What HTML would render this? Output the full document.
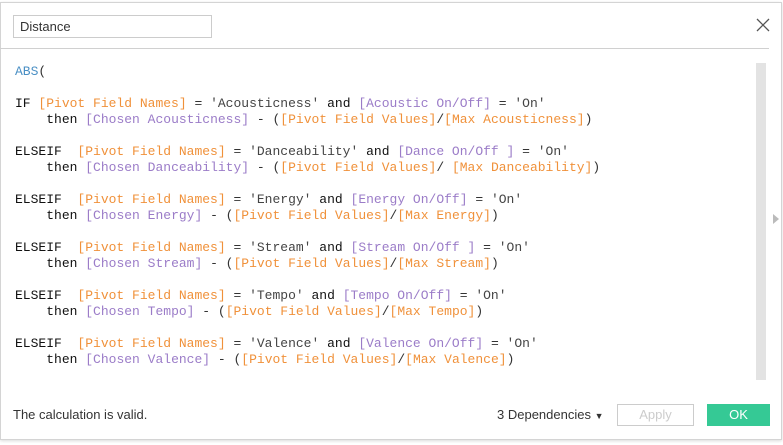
<!DOCTYPE html>
<html><head><style>
body{margin:0;width:783px;height:445px;background:#fff;position:relative;overflow:hidden;font-family:"Liberation Sans",sans-serif}
.dlg{position:absolute;left:0;top:2px;width:780px;height:436px;border:1px solid #d4d4d4;background:#fff;box-shadow:0 1px 3px rgba(0,0,0,.15)}
.name{position:absolute;left:13px;top:15px;border:1px solid #ccc;font-size:13px;color:#333;line-height:21px;padding-left:6px;box-sizing:border-box;width:199px;height:23px}
.hr{position:absolute;left:0;top:48px;width:769px;height:1px;background:#d0d0d0}
.x{position:absolute;left:756px;top:18px}
pre{position:absolute;left:15px;top:64px;margin:0;font:13px/16px "Liberation Mono",monospace;color:#333}
.k{color:#111}.f{color:#f0913a}.p{color:#9b7cc8}.fn{color:#4a8fc4}.s{color:#444}
.sb{position:absolute;left:756px;top:63px;width:10px;height:317px;background:#e3e3e3}
.arr{position:absolute;left:773px;top:214px;width:0;height:0;border-left:6px solid #bbb;border-top:5px solid transparent;border-bottom:5px solid transparent}
.valid{position:absolute;left:13px;top:407px;font-size:13px;color:#333}
.dep{position:absolute;left:497px;top:407px;font-size:13px;color:#333}
.apply{position:absolute;left:617px;top:404px;width:77px;height:22px;border:1px solid #ccc;box-sizing:border-box;font-size:13px;color:#ccc;text-align:center;line-height:20px}
.ok{position:absolute;left:707px;top:404px;width:63px;height:22px;background:#35c995;color:#fff;font-size:13px;text-align:center;line-height:22px}
</style></head><body>
<div class="dlg"></div>
<div class="name">Distance</div>
<svg class="x" width="14" height="14" viewBox="0 0 14 14"><path d="M1 1L13 13M13 1L1 13" stroke="#555" stroke-width="1.3"/></svg>
<div class="hr"></div>
<pre><span class="fn">ABS</span>(

<span class="k">IF</span> <span class="f">[Pivot Field Names]</span> = <span class="s">'Acousticness'</span> <span class="k">and</span> <span class="p">[Acoustic On/Off]</span> = <span class="s">'On'</span>
    <span class="k">then</span> <span class="p">[Chosen Acousticness]</span> - (<span class="f">[Pivot Field Values]</span>/<span class="f">[Max Acousticness]</span>)

<span class="k">ELSEIF</span>  <span class="f">[Pivot Field Names]</span> = <span class="s">'Danceability'</span> <span class="k">and</span> <span class="p">[Dance On/Off ]</span> = <span class="s">'On'</span>
    <span class="k">then</span> <span class="p">[Chosen Danceability]</span> - (<span class="f">[Pivot Field Values]</span>/ <span class="f">[Max Danceability]</span>)

<span class="k">ELSEIF</span>  <span class="f">[Pivot Field Names]</span> = <span class="s">'Energy'</span> <span class="k">and</span> <span class="p">[Energy On/Off]</span> = <span class="s">'On'</span>
    <span class="k">then</span> <span class="p">[Chosen Energy]</span> - (<span class="f">[Pivot Field Values]</span>/<span class="f">[Max Energy]</span>)

<span class="k">ELSEIF</span>  <span class="f">[Pivot Field Names]</span> = <span class="s">'Stream'</span> <span class="k">and</span> <span class="p">[Stream On/Off ]</span> = <span class="s">'On'</span>
    <span class="k">then</span> <span class="p">[Chosen Stream]</span> - (<span class="f">[Pivot Field Values]</span>/<span class="f">[Max Stream]</span>)

<span class="k">ELSEIF</span>  <span class="f">[Pivot Field Names]</span> = <span class="s">'Tempo'</span> <span class="k">and</span> <span class="p">[Tempo On/Off]</span> = <span class="s">'On'</span>
    <span class="k">then</span> <span class="p">[Chosen Tempo]</span> - (<span class="f">[Pivot Field Values]</span>/<span class="f">[Max Tempo]</span>)

<span class="k">ELSEIF</span>  <span class="f">[Pivot Field Names]</span> = <span class="s">'Valence'</span> <span class="k">and</span> <span class="p">[Valence On/Off]</span> = <span class="s">'On'</span>
    <span class="k">then</span> <span class="p">[Chosen Valence]</span> - (<span class="f">[Pivot Field Values]</span>/<span class="f">[Max Valence]</span>)</pre>
<div class="sb"></div>
<div class="arr"></div>
<div class="valid">The calculation is valid.</div>
<div class="dep">3 Dependencies <span style="font-size:9px">▼</span></div>
<div class="apply">Apply</div>
<div class="ok">OK</div>
</body></html>
